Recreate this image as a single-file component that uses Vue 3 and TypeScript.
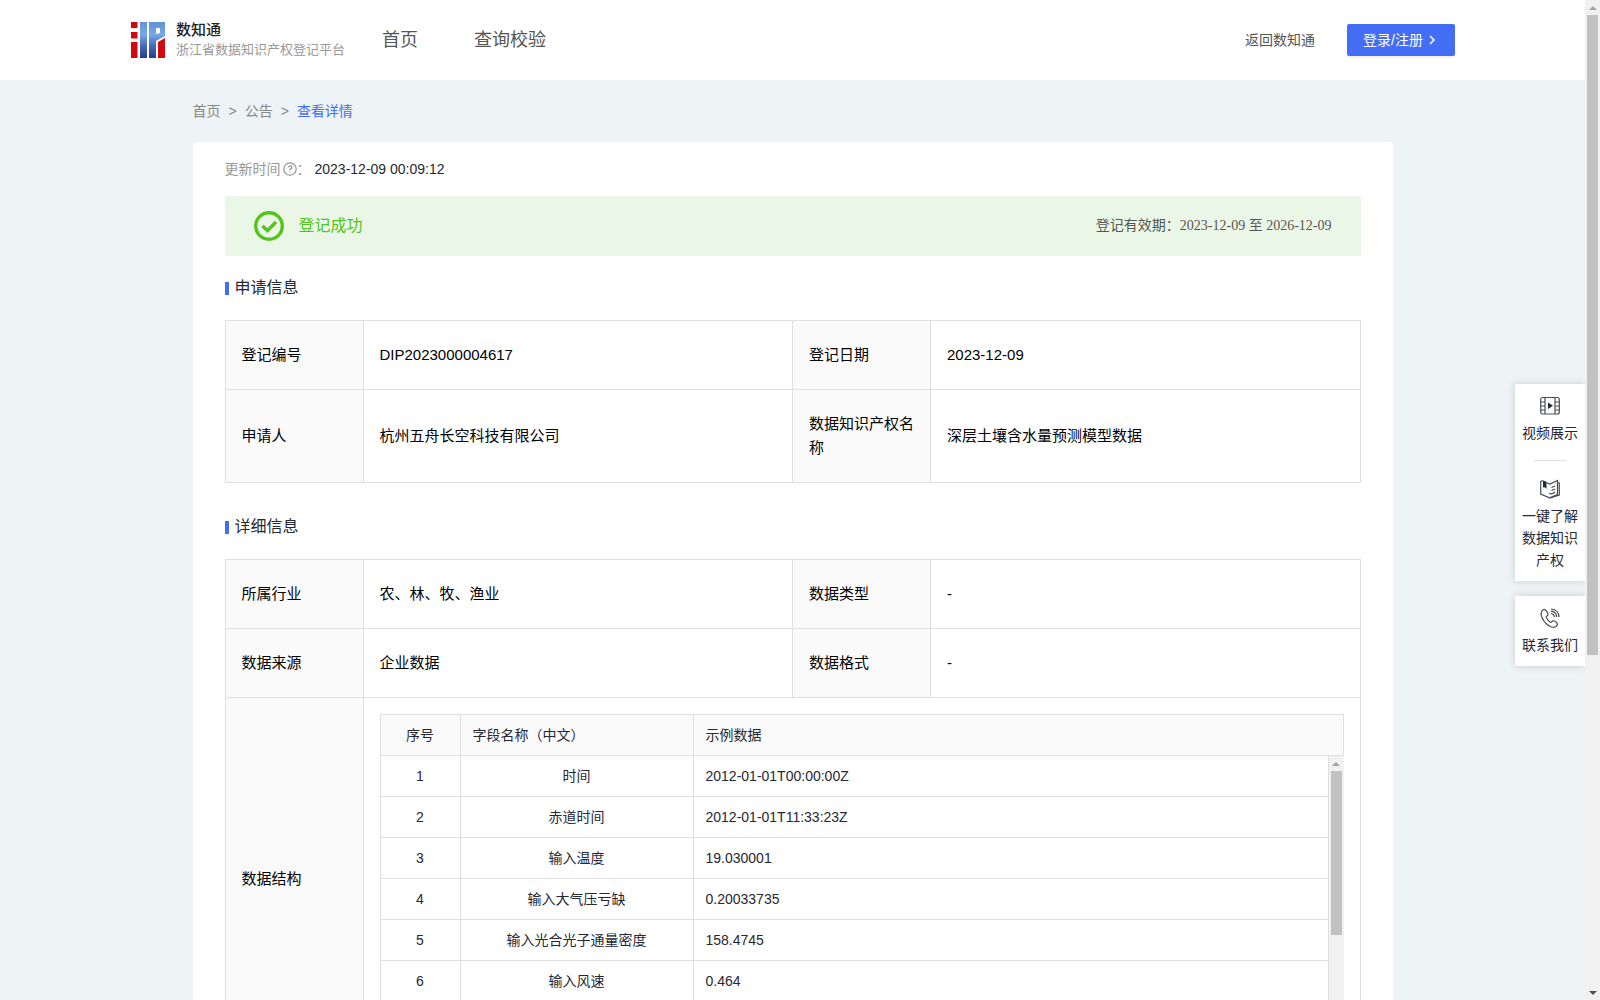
<script setup lang="ts">
interface Pair {
  label: string
  value: string
}

const applyRows: Pair[][] = [
  [
    { label: '登记编号', value: 'DIP2023000004617' },
    { label: '登记日期', value: '2023-12-09' },
  ],
  [
    { label: '申请人', value: '杭州五舟长空科技有限公司' },
    { label: '数据知识产权名称', value: '深层土壤含水量预测模型数据' },
  ],
]

const detailRows: Pair[][] = [
  [
    { label: '所属行业', value: '农、林、牧、渔业' },
    { label: '数据类型', value: '-' },
  ],
  [
    { label: '数据来源', value: '企业数据' },
    { label: '数据格式', value: '-' },
  ],
]

const fields: { name: string; sample: string }[] = [
  { name: '时间', sample: '2012-01-01T00:00:00Z' },
  { name: '赤道时间', sample: '2012-01-01T11:33:23Z' },
  { name: '输入温度', sample: '19.030001' },
  { name: '输入大气压亏缺', sample: '0.20033735' },
  { name: '输入光合光子通量密度', sample: '158.4745' },
  { name: '输入风速', sample: '0.464' },
]
</script>

<template>
  <div class="window">
    <div class="page">
      <header class="topbar">
        <a class="brand" href="#">
          <svg class="logo" viewBox="0 0 34 36" aria-hidden="true">
            <defs>
              <linearGradient id="logo-blue" x1="0" y1="0" x2="0" y2="36" gradientUnits="userSpaceOnUse">
                <stop offset="0" stop-color="#5f93d4" />
                <stop offset="0.35" stop-color="#78a8e2" />
                <stop offset="0.7" stop-color="#3f66b4" />
                <stop offset="1" stop-color="#233f8e" />
              </linearGradient>
            </defs>
            <path fill="#d20a10" d="M0 0h6.500v6H0zM0 10h6.500v6.500H0zM0 20h6.500v16H0zM27 20l7-4v20h-7z" />
            <path fill="url(#logo-blue)" d="M9 0h7v36H9zM18 0h16v14l-9 5v17h-7zM25 6v6l4-1V6z" fill-rule="evenodd" />
          </svg>
          <span class="brand-text">
            <strong>数知通</strong>
            <small>浙江省数据知识产权登记平台</small>
          </span>
        </a>
        <nav class="nav">
          <a href="#">首页</a>
          <a href="#">查询校验</a>
        </nav>
        <div class="actions">
          <a href="#">返回数知通</a>
          <button type="button" class="login">
            登录/注册
            <svg viewBox="0 0 12 12" aria-hidden="true"><path d="M3 2l4 4-4 4" /></svg>
          </button>
        </div>
      </header>

      <main class="container">
        <nav class="crumbs">
          <a href="#">首页</a><span>&gt;</span><a href="#">公告</a><span>&gt;</span><a href="#" class="current">查看详情</a>
        </nav>

        <article class="card">
          <div class="updated">
            <span class="muted">更新时间</span>
            <svg viewBox="0 0 14 14" aria-hidden="true">
              <circle cx="7" cy="7" r="6.200" />
              <path d="M5.200 5.600c0-2.400 3.600-2.400 3.600-.2 0 1.200-1.800 1.300-1.800 2.700M7 9.400v1.200" />
            </svg>
            <span class="muted colon">：</span>
            <time>2023-12-09 00:09:12</time>
          </div>

          <div class="banner">
            <svg viewBox="0 0 30 30" aria-hidden="true">
              <circle cx="15" cy="15" r="13.300" />
              <path d="M8.500 15l5 4.600 8.500-8.600" />
            </svg>
            <span class="status">登记成功</span>
            <span class="validity">登记有效期：2023-12-09 至 2026-12-09</span>
          </div>

          <section>
            <h2>申请信息</h2>
            <table class="info">
              <colgroup>
                <col class="c-label" /><col /><col class="c-label" /><col />
              </colgroup>
              <tbody>
                <tr v-for="(row, i) in applyRows" :key="i">
                  <template v-for="p in row" :key="p.label">
                    <th scope="row">{{ p.label }}</th>
                    <td>{{ p.value }}</td>
                  </template>
                </tr>
              </tbody>
            </table>
          </section>

          <section>
            <h2>详细信息</h2>
            <table class="info">
              <colgroup>
                <col class="c-label" /><col /><col class="c-label" /><col />
              </colgroup>
              <tbody>
                <tr v-for="(row, i) in detailRows" :key="i">
                  <template v-for="p in row" :key="p.label">
                    <th scope="row">{{ p.label }}</th>
                    <td>{{ p.value }}</td>
                  </template>
                </tr>
                <tr>
                  <th scope="row">数据结构</th>
                  <td colspan="3" class="nested">
                    <table class="fields head">
                      <colgroup><col class="f-no" /><col class="f-name" /><col /></colgroup>
                      <thead>
                        <tr>
                          <th scope="col" class="mid">序号</th>
                          <th scope="col">字段名称（中文）</th>
                          <th scope="col">示例数据</th>
                        </tr>
                      </thead>
                    </table>
                    <div class="scroll">
                      <table class="fields">
                        <colgroup><col class="f-no" /><col class="f-name" /><col /></colgroup>
                        <tbody>
                          <tr v-for="(f, i) in fields" :key="f.name">
                            <td class="mid">{{ i + 1 }}</td>
                            <td class="mid">{{ f.name }}</td>
                            <td>{{ f.sample }}</td>
                          </tr>
                        </tbody>
                      </table>
                      <div class="bar" aria-hidden="true">
                        <i class="arrow up"></i>
                        <i class="thumb"></i>
                        <i class="arrow down"></i>
                      </div>
                    </div>
                  </td>
                </tr>
              </tbody>
            </table>
          </section>
        </article>
      </main>

      <aside class="dock">
        <div class="dock-box">
          <a href="#">
            <svg viewBox="0 0 20 20" aria-hidden="true">
              <rect x="0.700" y="1.500" width="18.600" height="16.500" rx="2" />
              <path d="M5 1.500V18M15 1.500V18M1 6h4M1 10h4M1 14h4M15 6h4M15 10h4M15 14h4" />
              <path class="solid" d="M8 6.500l5 3.300-5 3.300z" />
            </svg>
            视频展示
          </a>
          <hr />
          <a href="#">
            <svg viewBox="0 0 20 20" aria-hidden="true">
              <path d="M3 1.500L.7 2.500v12.500l8.800 3.800 8-3.300V1.500L10 5 6.500 3.800M17.500 3.500l1.800.5v12L9.500 19.300M11.500 8.500l3.500-1.500M11.500 11.500l3.500-1.500M9 14.500c2 .8 4 .2 6-1.500" />
              <path class="solid" d="M3 1.500l3.500 1.300v7L4.700 8.200 3 8.500z" />
            </svg>
            一键了解数据知识产权
          </a>
        </div>
        <div class="dock-box">
          <a href="#">
            <svg viewBox="0 0 20 20" aria-hidden="true">
              <path d="M3.500 1.500C1 3 .5 6 2 9.500c2 4.500 5 8 9.500 9.500 3 .8 5.500-.5 6-2.500.3-1.500-3-4-4.500-3.700-1 .2-1.500 1.700-2.500 1.500-1.500-.5-4-3.500-4.300-5.300C6 8 8 7.800 8 6.500 8 5 5.500.8 3.500 1.500z" />
              <path d="M11 5.500c2 .3 3.200 1.500 3.500 3.500M11 3.200c3.300.3 5.300 2.400 5.700 5.800M11 1c4.700.3 7.700 3.300 8 8" />
            </svg>
            联系我们
          </a>
        </div>
      </aside>
    </div>

    <div class="bar page-bar" aria-hidden="true">
      <i class="arrow up"></i>
      <i class="thumb"></i>
      <i class="arrow down"></i>
    </div>
  </div>
</template>

<style>
body {
  margin: 0;
  background: #eef3f6;
}
</style>

<style scoped>
.window {
  display: flex;
  height: 100vh;
  overflow: hidden;
  font: 14px/22px "Liberation Sans", "Noto Sans CJK SC", sans-serif;
  color: #262833;
}
.page {
  flex: 1;
  min-width: 0;
  position: relative;
  overflow: hidden;
}
a {
  color: inherit;
  text-decoration: none;
}

/* top bar */
.topbar {
  display: flex;
  align-items: center;
  height: 80px;
  padding: 0 130px;
  background: #fff;
  color: #555;
}
.brand {
  display: flex;
  align-items: center;
  gap: 10px;
}
.logo {
  width: 36px;
  height: 36px;
}
.brand-text {
  display: flex;
  flex-direction: column;
}
.brand-text strong {
  font-size: 15px;
  line-height: 20px;
  font-weight: 500;
  color: #222;
}
.brand-text small {
  font-size: 13px;
  line-height: 20px;
  color: #999;
}
.nav {
  display: flex;
  gap: 56px;
  margin-left: 37px;
  font-size: 18px;
}
.actions {
  display: flex;
  align-items: center;
  gap: 32px;
  margin-left: auto;
}
.login {
  display: flex;
  align-items: center;
  gap: 4px;
  height: 32px;
  padding: 0 16px;
  border: 0;
  border-radius: 2px;
  background: #446df6;
  box-shadow: 0 2px 0 rgba(0, 0, 0, 0.05);
  color: #fff;
  font: inherit;
}
.login svg {
  width: 12px;
  height: 12px;
  fill: none;
  stroke: #fff;
  stroke-width: 1.5;
}

.container {
  max-width: 1200px;
  margin: 0 auto;
}
.crumbs {
  display: flex;
  gap: 8px;
  padding: 20px 0;
  color: #888;
}
.crumbs .current {
  color: #446df6;
}

.card {
  padding: 16px 32px 32px;
  border-radius: 4px;
  background: #fff;
}
.updated {
  display: flex;
  align-items: center;
}
.updated svg {
  width: 14px;
  height: 14px;
  margin-left: 2px;
  fill: none;
  stroke: #999;
  stroke-width: 1.3;
}
.muted {
  color: #999;
}
.colon {
  width: 18px;
}
.banner {
  display: flex;
  align-items: center;
  height: 60px;
  margin: 16px 0 20px;
  padding: 0 29px;
  background: #ebf7e6;
}
.banner svg {
  width: 30px;
  height: 30px;
  fill: none;
  stroke: #52c41a;
  stroke-width: 3.4;
}
.status {
  margin-left: 15px;
  font-size: 16px;
  color: #52c41a;
}
.validity {
  margin-left: auto;
  font-family: "Liberation Serif", "Noto Sans CJK SC", serif;
  color: #555;
}

section + section {
  margin-top: 32px;
}
h2 {
  display: flex;
  align-items: center;
  gap: 6px;
  margin: 0 0 20px;
  font-size: 16px;
  line-height: 24px;
  font-weight: 400;
}
h2::before {
  content: "";
  width: 4px;
  height: 13px;
  background: #446df6;
}

/* key / value tables */
table {
  width: 100%;
  table-layout: fixed;
  border-collapse: collapse;
}
th {
  font-weight: 400;
  text-align: left;
}
.info > tbody > tr > th,
.info > tbody > tr > td {
  padding: 22px 16px;
  border: 1px solid #e0e0e0;
  font-size: 15px;
  line-height: 24px;
  color: #000;
}
.info > tbody > tr > th {
  background: #fafafa;
}
.c-label {
  width: 138px;
}
.info > tbody > tr > td.nested {
  padding: 16px;
}

/* field list */
.fields {
  flex: 1;
  font-size: 14px;
  line-height: 22px;
  color: #262833;
}
.fields th,
.fields td {
  padding: 9px 12px;
  border: 1px solid #e0e0e0;
}
.fields th {
  background: #fafafa;
}
.scroll .fields tr:first-child td {
  border-top: 0;
}
.fields .mid {
  text-align: center;
}
.f-no {
  width: 80px;
}
.f-name {
  width: 233px;
}
.scroll {
  display: flex;
  height: 288px;
  overflow: hidden;
}
.scroll .fields {
  width: auto;
  align-self: flex-start;
}

/* scroll bars */
.bar {
  display: flex;
  flex-direction: column;
  align-items: center;
  flex: none;
  width: 15px;
  background: #f1f1f1;
}
.arrow {
  display: flex;
  align-items: center;
  justify-content: center;
  height: 15px;
}
.arrow::before {
  content: "";
  border: 4px solid transparent;
}
.arrow.up::before {
  border-top: 0;
  border-bottom-color: #a3a3a3;
}
.arrow.down::before {
  border-bottom: 0;
  border-top-color: #505050;
}
.arrow.down {
  margin-top: auto;
}
.thumb {
  width: 11px;
  height: 57%;
  background: #c1c1c1;
}
.page-bar .thumb {
  height: 64%;
}

/* floating shortcuts */
.dock {
  position: absolute;
  right: 0;
  top: 384px;
  display: flex;
  flex-direction: column;
  gap: 15px;
  width: 70px;
}
.dock-box {
  padding: 12px 7px 10px;
  background: #fff;
  box-shadow: 0 0 8px rgba(0, 0, 0, 0.16);
  text-align: center;
}
.dock-box a {
  display: flex;
  flex-direction: column;
  align-items: center;
  gap: 6px;
}
.dock svg {
  width: 20px;
  height: 20px;
  fill: none;
  stroke: #4a4c55;
  stroke-width: 1.2;
}
.dock .solid {
  fill: #262833;
  stroke: none;
}
.dock hr {
  width: 32px;
  height: 1px;
  margin: 16px auto 18px;
  border: 0;
  background: #e0e0e0;
}
</style>
